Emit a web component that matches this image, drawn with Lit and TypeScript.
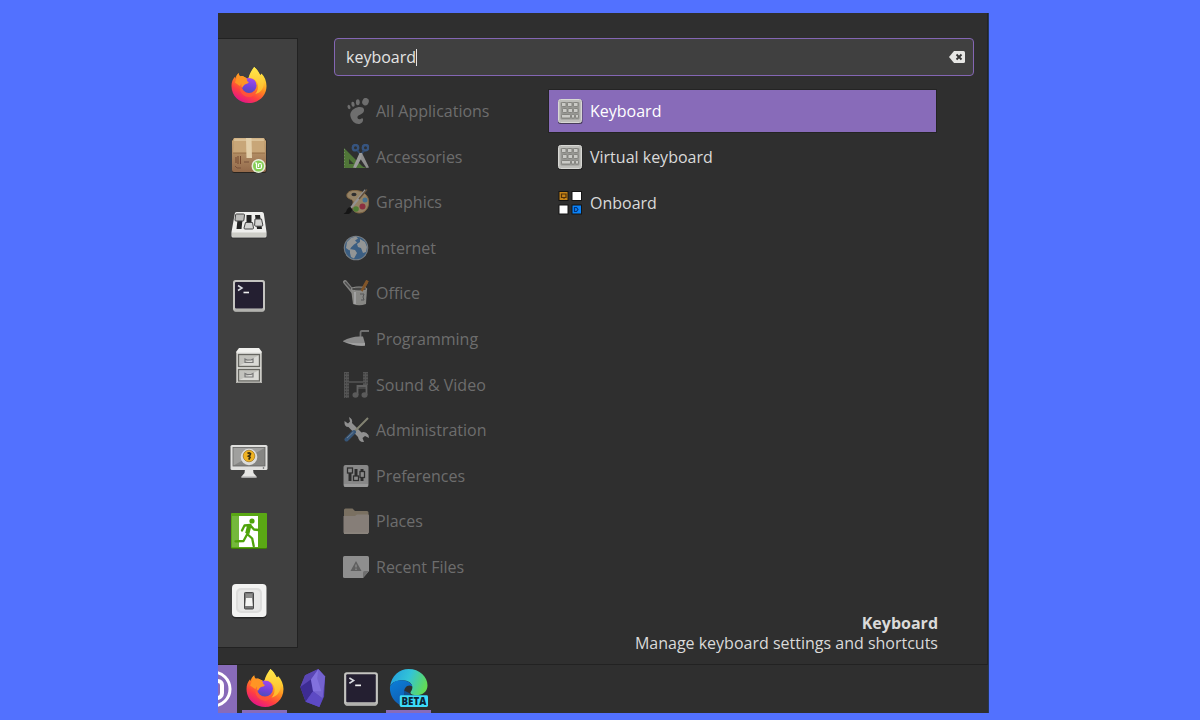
import { LitElement, html, css, svg, TemplateResult } from "lit";
import { customElement, property, state } from "lit/decorators.js";

type Glyph = { box: string; art: TemplateResult };

const terminal: Glyph = {
  box: "0 0 36 36",
  art: svg`
    <rect x="2.500" y="4" width="31" height="31" rx="2.500" fill="#8d8d8b"/>
    <rect x="2" y="3" width="32" height="31" rx="2.500" fill="#c4c4c0"/>
    <rect x="3.500" y="32" width="29" height="2.600" rx="1" fill="#b2b2ae"/>
    <rect x="4" y="5" width="28" height="26.500" rx="1" fill="#241f31"/>
    <path d="M7 8.500l4 2.500-4 2.500" fill="none" stroke="#d9dbe0" stroke-width="1.500"/>
    <path d="M12.500 15.500h5.500" stroke="#f0f0f0" stroke-width="1.600"/>`,
};

const glyphs: Record<string, Glyph> = {
  firefox: {
    box: "0 0 36 37",
    art: svg`
      <defs>
        <linearGradient id="ff" x1="0.85" y1="0.05" x2="0.35" y2="1">
          <stop offset="0" stop-color="#fff44f"/><stop offset=".25" stop-color="#ffcb30"/>
          <stop offset=".5" stop-color="#ff8a1e"/><stop offset=".75" stop-color="#ff4040"/>
          <stop offset="1" stop-color="#e31587"/>
        </linearGradient>
        <linearGradient id="ffg" x1="0.6" y1="0" x2="0.4" y2="1">
          <stop offset="0" stop-color="#a04af0"/><stop offset=".6" stop-color="#7142d8"/>
          <stop offset="1" stop-color="#4b4fb8"/>
        </linearGradient>
        <linearGradient id="ffy" x1="0" y1="0" x2="0" y2="1">
          <stop offset="0" stop-color="#ffe94a"/><stop offset="1" stop-color="#ffb52a"/>
        </linearGradient>
      </defs>
      <path fill="url(#ff)" d="M23.3 0c3 2 4.600 5 6 8 .6.4 1-.1 1.500-1.300C34 10 36 14.500 36 19.500 36 29.500 28 37 18 37S0 29.500 0 19.500C0 15.500 1.300 12.500 3.500 10l.3 2C4.500 9.500 5.600 7.600 7.500 6.200c-.1 1.600.3 2.600 1.200 3.500 1-.4 2-.5 3.200-.3L17 12z"/>
      <circle cx="18" cy="19" r="7.800" fill="url(#ffg)"/>
      <path fill="url(#ffy)" d="M23.300 0c3.400 3.200 4.500 6.500 7.200 9.500 2.600 3 3.300 6.700 2.300 10.500-1.700 5-5.300 7.300-8.600 7.700 3.600-3.500 4.200-8.700 1.500-12.700-2-3-6-4.500-8.200-3.400C18.500 7 20.500 3.500 23.300 0z"/>
      <path fill="#ff9524" d="M7.500 6.200c0 2 .8 3 2 3.500 3-.7 5 1.500 7 3.700-1 .5-1 .8 1 2 .6.8-.4 1.500-2.500 2-1.800.5-3 2.300-3.800 3.800L3.500 16z"/>
      <path fill="#ff5a36" d="M10.200 17c-.5 6 3.300 10.200 8.300 10.200 4 0 6.500-1.800 7.800-4-.3 4-3.600 7.600-8.300 7.600-6 0-10-5-9.500-11z" opacity=".75"/>`,
  },
  package: {
    box: "0 0 36 36",
    art: svg`
      <defs><linearGradient id="bx" x1="0" y1="0" x2="0" y2="1">
        <stop offset="0" stop-color="#c9a878"/><stop offset="1" stop-color="#93694a"/></linearGradient></defs>
      <rect x="1" y="1.500" width="34.500" height="34.500" rx="2.500" fill="#282420"/>
      <path d="M3 1h30l2 3v29a2 2 0 0 1-2 2H3a2 2 0 0 1-2-2V4z" fill="url(#bx)"/>
      <path d="M3.500 1.500h29L34 15.500H2z" fill="#c8a678"/>
      <path d="M3.500 1.500h29L33 4H3z" fill="#dac096"/>
      <path d="M2 15.500h32v1.500H2z" fill="#a27c53"/>
      <path d="M15 1h5.500l.5 20h-5.500z" fill="#e3cfaa"/>
      <path d="M5 20v6M7 19v8M9.500 19v8" stroke="#73472e" stroke-width="1"/>
      <path d="M4 29l2 2h4M13 25h5" stroke="#77503a" fill="none"/>
      <circle cx="27.500" cy="29" r="7" fill="#e6eed9"/>
      <circle cx="27.500" cy="29" r="5.500" fill="#86cf56"/>
      <path d="M24 26h1.500v4.500q0 1 1 1h2.500q1.500 0 1.500-1.500v-2.500M27.500 30v-3M30.500 27q-1.500-1-3 0" fill="none" stroke="#fff" stroke-width="1.200"/>`,
  },
  sliders: {
    box: "0 0 36 36",
    art: svg`
      <path d="M5 7h26.500l4 20.500v4H.5v-4z" fill="#222" opacity=".5"/>
      <path d="M5.500 5h25.500q1.500 0 1.800 1.500L35.500 25v4q0 1.500-1.500 1.500H2Q.5 30.500.5 29v-4L3.800 6.500Q4 5 5.500 5z" fill="#efefed"/>
      <path d="M1 25.500h34v3.500q0 1-1 1H2q-1 0-1-1z" fill="#cecec8"/>
      <path d="M7 8h5L10.500 22H5.500zM15.500 8h5v13h-5zM24 8h5l2 14h-5z" fill="#242424"/>
      <path d="M5.500 7h7q1 0 1 1l-.6 5q0 1-1 1H5q-1 0-1-1l.6-5q0-1 .9-1z" fill="#bcbcba" stroke="#444" stroke-width="1"/>
      <path d="M14.500 15.500h7l1 5.500q0 1-1 1h-7.500q-1 0-1-1z" fill="#d4d4d2" stroke="#444" stroke-width="1"/>
      <path d="M24 12h6.500l1.300 6q0 1.200-1 1.200h-6q-1 0-1.200-1z" fill="#d4d4d2" stroke="#444" stroke-width="1"/>`,
  },
  terminal,
  cabinet: {
    box: "0 0 36 36",
    art: svg`
      <path d="M5 5L8 1h20l3 4v31H5z" fill="#f0f0ed"/>
      <path d="M5 5.500h26V36H5z" fill="#dededa"/>
      <path d="M5.500 5.500V35.500h25V5.500" fill="none" stroke="#aaa9a4"/>
      <g fill="#c2c2bd" stroke="#666661" stroke-width="1.300"><rect x="7.500" y="7.500" width="21" height="12"/><rect x="7.500" y="22.500" width="21" height="11.500"/></g>
      <path d="M8.500 18.500L27.500 8.500v10zM8.500 33L27.500 23.500V33z" fill="#e4e4e1" opacity=".7"/>
      <g fill="none" stroke="#777" stroke-width="1.200"><path d="M14 12v3.500h8V12l-2 1h-4z"/><path d="M14 26.500V30h8v-3.500l-2 1h-4z"/></g>`,
  },
  monitor: {
    box: "0 0 38 36",
    art: svg`
      <path d="M15 26h8l.5 4 3 3.500v1H11.500v-1l3-3.500z" fill="#e6e6e4"/>
      <path d="M11.500 33.500h15v1.300h-15z" fill="#aaa"/>
      <rect x=".5" y="2" width="37" height="25" rx="1.500" fill="#e0e0de"/>
      <rect x="3" y="4.500" width="32" height="18.500" fill="#858583" stroke="#636361" stroke-width=".8"/>
      <path d="M3.500 5h31L3.500 22.500z" fill="#a0a09e"/>
      <circle cx="33.500" cy="25" r=".8" fill="#555"/>
      <circle cx="19" cy="14" r="8.300" fill="#dcdcda"/>
      <circle cx="19" cy="13" r="5.800" fill="#f0b323" stroke="#9d7215" stroke-width=".7"/>
      <path d="M17.500 10.500q2-1.500 3 .3 0 1.400-2 2.400l1.500 1-1.200 2.500" fill="none" stroke="#3c300f" stroke-width="1.800"/>`,
  },
  exit: {
    box: "0 0 36 36",
    art: svg`
      <rect y="0" width="36" height="36" rx="1.500" fill="#3c7c04"/>
      <rect x="0" y="0" width="36" height="35" rx="1" fill="#5aa814"/>
      <path d="M8 3h19v31H8z" fill="#fff"/>
      <path d="M1 3l7 0v31H1z" fill="#74b83c"/>
      <circle cx="21" cy="8" r="2.600" fill="#4fa30a"/>
      <path d="M19.500 12l-6 .5-2.500 5M19 12l4 4.500 4.500.5M18.500 12.500l-2.300 8.500 5 4.500 1.500 7.500M16.300 21l-3.800 7-8 .3" fill="none" stroke="#4fa30a" stroke-width="2.300" stroke-linecap="round" stroke-linejoin="round"/>
      <path d="M18.300 12.500l-2 8" stroke="#4fa30a" stroke-width="4.300"/>`,
  },
  power: {
    box: "0 0 36 36",
    art: svg`
      <rect x="1" y="2" width="34.500" height="33.500" rx="4" fill="#262626"/>
      <rect x="1" y="1" width="34.500" height="33" rx="4" fill="#f3f3f2"/>
      <rect x="5" y="5" width="26" height="25" rx="5" fill="#dddddc"/>
      <rect x="7" y="7" width="22" height="21" rx="4" fill="#e8e8e7"/>
      <rect x="13.500" y="9.500" width="9" height="16.500" rx=".8" fill="#777" stroke="#484848"/>
      <path d="M15 15h6l.8 8h-7.600z" fill="#f4f4f2"/><path d="M15 11h6v4h-6z" fill="#8d8d8b"/>`,
  },
  start: {
    box: "0 0 38 38",
    art: svg`
      <circle cx="19" cy="19" r="17" fill="none" stroke="#fff" stroke-width="3"/>
      <path d="M10 10v12a6 6 0 0 0 6 6h7a5 5 0 0 0 5-5v-8a4 4 0 0 0-8 0v7" fill="none" stroke="#fff" stroke-width="4"/>`,
  },
  obsidian: {
    box: "0 0 36 36",
    art: svg`
      <path d="M23 0l6.500 7-1 19-4.500 10-13-5L6 17l4.500-11z" fill="#5a45ba"/>
      <path d="M23 0l-7 10 2 11 9 7 2.500-21z" fill="#7463d0"/>
      <path d="M23 0L10.500 6 6 17l10-7z" fill="#5a46b4"/>
      <path d="M6 17l10-7 2 11-7 10z" fill="#3d2c93"/>
      <path d="M18 21l9 7-3 8-13-5z" fill="#5d4ac4"/>
      <path d="M23 0l-1 9 4 12-8 0-2-11z" fill="#8f7feb" opacity=".5"/>`,
  },
  edge: {
    box: "0 0 40 39",
    art: svg`
      <defs>
        <linearGradient id="eg" x1="0" y1=".2" x2="1" y2=".5"><stop offset="0" stop-color="#229fdf"/><stop offset=".5" stop-color="#33c4d7"/><stop offset="1" stop-color="#62dc55"/></linearGradient>
        <linearGradient id="eb" x1="0" y1="0" x2=".6" y2="1"><stop offset="0" stop-color="#0a7fd8"/><stop offset="1" stop-color="#1259ae"/></linearGradient>
      </defs>
      <path d="M.5 18C2 7 10 0 19.500 0 31 0 39 8 39 17c0 6-5 10-11 10-4 0-6.500-1-6.500-2.500C21.500 23 23.500 22 23.500 19c0-4.500-4.500-7.500-10-7.500C7 11.500 2 14 .5 18z" fill="url(#eg)"/>
      <path d="M.5 18C3 13 8 11 13.500 11.500c5 .3 9.500 3 10 6.500-4.500-3-9 1-8.500 6.500.5 6 5 10 12 10.500C24 38 21 39 19.500 39 8 39-.5 29 .5 18z" fill="url(#eb)"/>
      <path d="M15 22c-1 6 3 12 11 13l5-3-9-5-1.500-2z" fill="#14508f"/>
      <rect x="10.500" y="27" width="29" height="12" rx="1.500" fill="#3cdcf8"/>
      <text x="25" y="36.700" text-anchor="middle" font-family="Open Sans, sans-serif" font-size="10" font-weight="800" fill="#0c2437">BETA</text>`,
  },
  foot: {
    box: "0 0 26 26",
    art: svg`<g fill="#a2a2a2">
      <ellipse cx="22.500" cy="3.700" rx="3.200" ry="3.800" transform="rotate(22 22.500 3.700)"/>
      <ellipse cx="14.800" cy="4.300" rx="1.900" ry="3"/>
      <ellipse cx="10" cy="6.300" rx="1.600" ry="2.500" transform="rotate(-12 10 6.300)"/>
      <ellipse cx="6" cy="9" rx="1.400" ry="2.200" transform="rotate(-20 6 9)"/>
      <path d="M21 11.500c-.5-2.500-4-3-7-2-4.500 1.300-7.500 5-6.500 9 1 4.500 4.500 7.500 8 7.500 3 0 5-2.500 4.500-5-.3-1.500-1.500-.7-2.500 0-1.800 1-3.500-.7-3-2.200.7-2.300 7.300-2.500 6.500-7.300z"/></g>`,
  },
  accessories: {
    box: "0 0 26 26",
    art: svg`
      <path d="M1 4l20 20H1z" fill="#6bb040"/><path d="M6 15l5 5H6z" fill="#35462c"/>
      <path d="M1.500 5v18.500" stroke="#a8d488" stroke-dasharray="1 2"/>
      <path d="M14 21l10 3H14z" fill="#6bb040"/>
      <g fill="none" stroke="#3c73c2" stroke-width="2.400"><circle cx="12.500" cy="3.700" r="2.700"/><circle cx="22.500" cy="3.700" r="2.700"/></g>
      <path d="M14.500 6.500l3 4M21 6.500l-3 4" stroke="#335f9f" stroke-width="2"/>
      <path d="M16.500 9h2.500l7 14.500-2.500.5-6-9z" fill="#dcdcdc"/>
      <path d="M16.500 9h2.500l-1 6-5 9-3-.5z" fill="#f4f4f4"/>`,
  },
  graphics: {
    box: "0 0 26 26",
    art: svg`
      <path d="M13 1.500C6.500 1 3 4 4 7.500c1 3 5 2 6 4.500.7 2-1.500 5 0 8.500 1.500 3.500 7.500 5 12 1.500 4.500-4 5-11 1.500-15.500C21 3 17 1.800 13 1.500z" fill="#e8c692" stroke="#c49455"/>
      <ellipse cx="11" cy="5.500" rx="2.600" ry="1.800" fill="#303030"/>
      <circle cx="22" cy="11" r="2.500" fill="#5ba8e0"/><circle cx="19.500" cy="17.500" r="3" fill="#d8304f"/><circle cx="13" cy="20" r="2.800" fill="#6cc03a"/>
      <path d="M22.500 1L7 20" stroke="#e4e4e4" stroke-width="2"/><path d="M24 .5L16 10" stroke="#8a6845" stroke-width="1.500"/>
      <path d="M7.500 18q-3 0-4.500 5L.5 25h5q3.500-1.500 3.500-5z" fill="#000"/>`,
  },
  internet: {
    box: "0 0 26 26",
    art: svg`
      <circle cx="13" cy="13" r="12.300" fill="#b6c0ca"/><circle cx="13" cy="13" r="11.200" fill="#4686c6"/>
      <path d="M4 7l4-4 5-1.500 2 2-3 2 2 2-3 2-3 3-1.500 3L3 13zM7 14l5 1 2 3-3 5.500L8 22l-1-4zM17 4l5 3 2 5-1 5-3 1-2-5-3-1-1-3 3-2z" fill="#e6e9ea"/>`,
  },
  office: {
    box: "0 0 26 26",
    art: svg`
      <path d="M2 2L11 13" stroke="#c4c4c2" stroke-width="4" stroke-linecap="round"/><path d="M2 2L10 11" stroke="#666" stroke-width="1.500"/>
      <path d="M24.500.5L18 12" stroke="#c47425" stroke-width="3"/>
      <path d="M8 9h16l-1 15q-7 2.500-13 0z" fill="#cfcfca"/><ellipse cx="16" cy="9" rx="8" ry="2" fill="#5a5a58" stroke="#e8e8e4"/>
      <path d="M12 12v12" stroke="#fff" stroke-width="2"/><path d="M17 14h4l-1 3 1 3h-3" fill="none" stroke="#777"/>
      <path d="M24 2L18.500 11" stroke="#c47425" stroke-width="2.500"/>`,
  },
  programming: {
    box: "0 0 26 26",
    art: svg`
      <path d="M26 5h-7q-1.500 0-1.500 2v6" fill="none" stroke="#a9a9a9" stroke-width="1.800"/>
      <path d="M0 15c5-3 11-4.500 16-4.500h4l2 7v2q-12 1-22-4z" fill="#d6d6d6"/>
      <path d="M2 16q10 2 20 1v2.500q-10 1-20-3.500z" fill="#fff"/>`,
  },
  media: {
    box: "0 0 26 26",
    art: svg`
      <path d="M3.500 0v26M22.500 0v13" stroke="#757575" stroke-width="5"/>
      <path d="M2.500 1v25M5 1v25M21 1v12M24 1v12" stroke="#444" stroke-width="1.200" stroke-dasharray="1.500 1.500"/>
      <path d="M6 10h14" stroke="#757575" stroke-width="1.500"/>
      <path d="M14.500 23v-9h9v9" fill="none" stroke="#8a8a8a" stroke-width="1.800"/><path d="M14.500 16h9" stroke="#8a8a8a"/>
      <ellipse cx="12.500" cy="23" rx="3" ry="2.700" fill="#808080"/><ellipse cx="21.500" cy="23" rx="3" ry="2.700" fill="#808080"/>`,
  },
  tools: {
    box: "0 0 26 26",
    art: svg`
      <path d="M6 0q4 2 3 6l9.500 9.500q4-1.500 7 2.500l.5 3-4-2-2.500 2 1.500 4q-5 .5-6-5L5.500 10Q1 10 1.500 4l3.500 2.500 2-2z" fill="#e0e0e0"/>
      <path d="M25 1L11 15" stroke="#c8c8aa" stroke-width="2"/>
      <path d="M11 15L3.500 22.500" stroke="#3d74b3" stroke-width="4" stroke-linecap="round"/><path d="M10.500 15l-6.500 6" stroke="#9dc1e5"/>`,
  },
  preferences: {
    box: "0 0 26 26",
    art: svg`
      <rect x=".5" y="2" width="25" height="22" rx="2" fill="#d2d2d2"/><path d="M1 21h24v1.500q0 1.500-1.500 1.500h-21Q1 24 1 22.500z" fill="#f0f0f0"/>
      <path d="M7 6v12M13 6v12M19 6v12" stroke="#2c2c2c" stroke-width="3"/>
      <g fill="#d6d6d6" stroke="#2e2e2e" stroke-width="1.300"><rect x="4.500" y="5" width="5" height="5"/><rect x="10.500" y="13" width="5" height="4.500"/><rect x="17" y="8.500" width="4.500" height="6"/></g>`,
  },
  folder: {
    box: "0 0 26 26",
    art: svg`
      <path d="M1 2q0-1.500 1.500-1.500h7L12 3h12q1.500 0 1.500 1.500V25H1z" fill="#b8a68a"/>
      <path d="M.5 8h11.500l2-1.500h11q1 0 1 1V24q0 1.500-1.500 1.500h-23Q.5 25.500.5 24z" fill="#cdc0b4"/>
      <path d="M1 25.300h24" stroke="#eee0d2"/>`,
  },
  recent: {
    box: "0 0 26 26",
    art: svg`
      <path d="M1.500 2h23Q26 2 26 3.500V17l-6 7H1.500Q0 24 0 22.500v-19Q0 2 1.500 2z" fill="#dcdcdc"/>
      <path d="M26 17l-6 7v-5.500q0-1.500 1.500-1.500z" fill="#a5a5a5"/>
      <path d="M13 7l5.500 10h-11z" fill="#888"/><path d="M13 10.500v3M13 14.500v1.500" stroke="#ddd" stroke-width="1.300"/>`,
  },
  keyboard: {
    box: "0 0 26 26",
    art: svg`
      <rect x="1" y="1.500" width="24.500" height="24.500" rx="2.500" fill="#1d1d1d" opacity=".6"/>
      <rect x="1.500" y="1.500" width="23" height="23" rx="2" fill="#bdbdb9" stroke="#d8d8d4"/>
      <rect x="3.500" y="4" width="19" height="17.500" rx="1" fill="#979793"/>
      <g fill="#cacac6" stroke="#787874" stroke-width=".8">
        <rect x="4.500" y="4.500" width="4.500" height="4" rx="1"/><rect x="10.500" y="4.500" width="4.500" height="4" rx="1"/><rect x="16.500" y="4.500" width="4.500" height="4" rx="1"/>
        <rect x="5.500" y="10.500" width="4.500" height="4" rx="1"/><rect x="11" y="10.500" width="4.500" height="4" rx="1"/><rect x="16.500" y="10.500" width="4.500" height="4" rx="1"/>
        <rect x="4.500" y="16.500" width="9" height="3.500" rx="1"/><rect x="14.500" y="16.500" width="3" height="3.500" rx="1"/><rect x="18.500" y="16.500" width="3" height="3.500" rx="1"/>
      </g>`,
  },
  onboard: {
    box: "0 0 26 26",
    art: svg`
      <g stroke="#151515"><rect x="2" y="1.500" width="9" height="9" fill="#c68418"/><rect x="15" y="1.500" width="9.500" height="9" fill="#fff"/>
      <rect x="2" y="15" width="9" height="9" fill="#fff"/><rect x="15" y="15" width="9.500" height="9" fill="#0b83f8"/></g>
      <path d="M4.500 4h4.500v3.500H4.500zM6 8h2" fill="none" stroke="#51300a" stroke-width="1.200"/>
      <path d="M17.500 17.500v4h2l1.500-2-1.500-2z" fill="none" stroke="#06357a" stroke-width="1.200"/>`,
  },
  clear: {
    box: "0 0 16 12",
    art: svg`
      <path d="M5 0h9.500Q16 0 16 1.500v9q0 1.500-1.500 1.500H5L0 6z" fill="#e6e6e4"/>
      <path d="M7.500 3.500l5 5M12.500 3.500l-5 5" stroke="#333" stroke-width="1.800"/>`,
  },
};

@customElement("menu-icon")
class MenuIcon extends LitElement {
  @property() name = "";
  static styles = css`
    :host { display: block; flex: none; }
    .art { display: block; width: 100%; height: 100%; }
  `;
  render() {
    const g = glyphs[this.name];
    return html`<svg class="art" viewBox=${g.box} aria-hidden="true">${g.art}</svg>`;
  }
}

const favourites = [
  ["firefox", "Firefox"], ["package", "Software Manager"], ["sliders", "System Settings"],
  ["terminal", "Terminal"], ["cabinet", "Files"],
];
const session = [["monitor", "Lock Screen"], ["exit", "Log Out"], ["power", "Quit"]];
const categories = [
  ["foot", "All Applications"], ["accessories", "Accessories"], ["graphics", "Graphics"],
  ["internet", "Internet"], ["office", "Office"], ["programming", "Programming"],
  ["media", "Sound & Video"], ["tools", "Administration"], ["preferences", "Preferences"],
  ["folder", "Places"], ["recent", "Recent Files"],
];
const results = [["keyboard", "Keyboard"], ["keyboard", "Virtual keyboard"], ["onboard", "Onboard"]];
const tasks: [string, string, boolean][] = [
  ["firefox", "Firefox", true], ["obsidian", "Obsidian", false],
  ["terminal", "Terminal", false], ["edge", "Microsoft Edge Beta", true],
];

@customElement("app-root")
class AppRoot extends LitElement {
  @state() query = "keyboard";
  @state() selected = 0;

  static styles = css`
    :host {
      display: grid;
      grid-template-columns: 218fr 771fr 211fr;
      min-height: 100vh;
      box-sizing: border-box;
      padding: 13px 0 7px;
      background: #5271ff;
      font-family: "Open Sans", "Noto Sans", sans-serif;
      font-size: 16px;
      line-height: 20px;
      color: #dadada;
    }
    * { box-sizing: border-box; }
    button {
      display: flex;
      align-items: center;
      border: 0;
      padding: 0;
      margin: 0;
      background: none;
      font: inherit;
      color: inherit;
      text-align: left;
    }
    .desktop {
      grid-column: 2;
      display: flex;
      flex-direction: column;
      min-width: 0;
      background: #2f2f2f;
      border-right: 1px solid #25385a;
    }
    .menu {
      flex: 1;
      display: flex;
      gap: 36px;
      padding: 25px 13px 11px 0;
      border-right: 1px solid #242424;
      border-bottom: 1px solid #222222;
    }
    .sidebar {
      width: 80px;
      display: flex;
      flex-direction: column;
      justify-content: space-between;
      margin-bottom: 5px;
      padding: 28px 0 28px 12px;
      background: #404040;
      border: 1px solid #222222;
      border-left: 0;
    }
    .group { display: flex; flex-direction: column; gap: 34px; }
    .launcher { width: 38px; justify-content: center; }
    .launcher menu-icon { width: 38px; height: 36px; }
    .main { flex: 1; min-width: 0; display: flex; flex-direction: column; }
    .search {
      display: flex;
      align-items: center;
      height: 38px;
      padding: 0 8px 0 11px;
      background: #404040;
      border: 1px solid #8466b4;
      border-radius: 4px;
    }
    .query {
      field-sizing: content;
      border: 0;
      padding: 0;
      outline: 0;
      background: none;
      font: inherit;
      color: #e4e4e4;
    }
    .caret { width: 1px; height: 17px; background: #e4e4e4; }
    .clear { margin-left: auto; }
    .clear menu-icon { width: 16px; height: 12px; }
    .columns { flex: 1; display: flex; gap: 16px; padding: 13px 37px 0 0; }
    .categories {
      width: 198px;
      display: flex;
      flex-direction: column;
      justify-content: space-between;
      color: #6d6d6d;
    }
    .row { gap: 7px; height: 44px; padding-left: 9px; width: 100%; }
    .row menu-icon { width: 26px; height: 26px; }
    .categories menu-icon { opacity: 0.55; }
    .results { flex: 1; display: flex; flex-direction: column; gap: 2px; }
    .selected { background: #886bb9; border: 1px solid #242424; padding-left: 8px; color: #ffffff; }
    .about { padding: 24px 36px 0 0; text-align: right; }
    .title, .detail { margin: 0; }
    .title { font-weight: 700; }
    .panel { display: flex; gap: 3px; height: 48px; }
    .start { width: 19px; margin-right: 2px; justify-content: flex-end; overflow: hidden; background: #886bb9; }
    .start menu-icon { width: 38px; height: 38px; margin-right: 5px; }
    .task { width: 45px; justify-content: center; border-bottom: 3px solid transparent; }
    .task menu-icon { width: 40px; height: 38px; }
    .running { border-bottom-color: #886bb9; }
  `;

  private launcher([icon, label]: string[]) {
    return html`<button class="launcher" aria-label=${label}><menu-icon name=${icon}></menu-icon></button>`;
  }

  render() {
    return html`
      <div class="desktop">
        <div class="menu">
          <nav class="sidebar">
            <div class="group">${favourites.map((f) => this.launcher(f))}</div>
            <div class="group">${session.map((s) => this.launcher(s))}</div>
          </nav>
          <div class="main">
            <label class="search">
              <input class="query" type="text" aria-label="Search" .value=${this.query}
                @input=${(e: Event) => (this.query = (e.target as HTMLInputElement).value)} />
              <span class="caret"></span>
              <button class="clear" aria-label="Clear" @click=${() => (this.query = "")}>
                <menu-icon name="clear"></menu-icon>
              </button>
            </label>
            <div class="columns">
              <nav class="categories">
                ${categories.map(([icon, label]) => html`<button class="row"><menu-icon name=${icon}></menu-icon>${label}</button>`)}
              </nav>
              <div class="results">
                ${results.map(([icon, label], i) => html`
                  <button class="row ${i === this.selected ? "selected" : ""}" @click=${() => (this.selected = i)}>
                    <menu-icon name=${icon}></menu-icon>${label}
                  </button>`)}
              </div>
            </div>
            <div class="about">
              <p class="title">Keyboard</p>
              <p class="detail">Manage keyboard settings and shortcuts</p>
            </div>
          </div>
        </div>
        <div class="panel">
          <button class="start" aria-label="Menu"><menu-icon name="start"></menu-icon></button>
          ${tasks.map(([icon, label, running]) => html`
            <button class="task ${running ? "running" : ""}" aria-label=${label}><menu-icon name=${icon}></menu-icon></button>`)}
        </div>
      </div>
    `;
  }
}
